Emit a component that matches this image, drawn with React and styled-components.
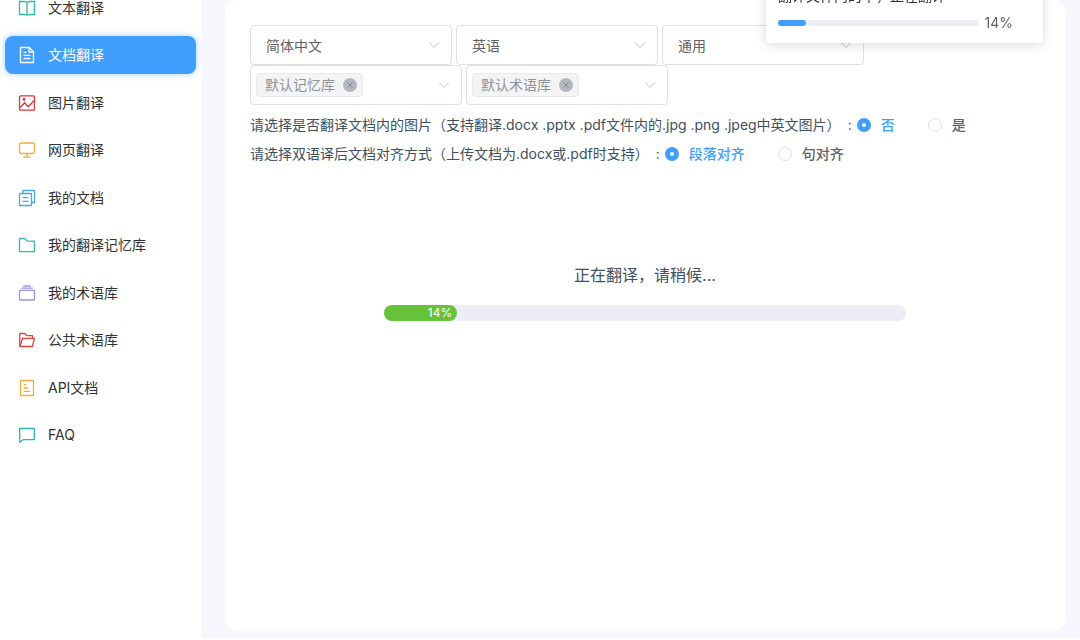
import { useState } from "react";
import styled, { createGlobalStyle } from "styled-components";

const menus = [
  { id: "text", name: "文本翻译", color: "#2fb5a5" },
  { id: "doc", name: "文档翻译", color: "#ffffff" },
  { id: "image", name: "图片翻译", color: "#d9363e" },
  { id: "web", name: "网页翻译", color: "#f0ad3c" },
  { id: "myDoc", name: "我的文档", color: "#4ba3e3" },
  { id: "memory", name: "我的翻译记忆库", color: "#3fb8ac" },
  { id: "term", name: "我的术语库", color: "#9c94e6" },
  { id: "publicTerm", name: "公共术语库", color: "#e0443e" },
  { id: "api", name: "API文档", color: "#f0ad3c" },
  { id: "faq", name: "FAQ", color: "#2fb5b0" },
];

const icons = {
  text: (
    <>
      <path d="M1.5 2.5h5.2L9 3.3l2.3-.8h5.2v13h-5.2l-2.3.7-2.3-.7H1.5z" />
      <path d="M9 3.3v12.9" />
    </>
  ),
  doc: (
    <>
      <path d="M2.5 1.5h8.7l4.3 4.3v10.7h-13z" />
      <path d="M11 1.5V6h4.5M5.5 6.3h3M5.5 9.3h7M5.5 12.5h7" />
    </>
  ),
  image: (
    <>
      <rect x="1.5" y="1.8" width="15" height="14.4" rx="1" />
      <path d="M2 13.8l4.6-5 3.7 4 6-6.5" />
      <circle cx="6" cy="5.4" r="0.8" fill="currentColor" />
    </>
  ),
  web: (
    <>
      <rect x="1.5" y="2" width="15" height="10.5" rx="1.8" />
      <path d="M9 12.5v3.6M5.2 16.2h7.6" />
    </>
  ),
  myDoc: (
    <>
      <rect x="1.5" y="4.5" width="12" height="12" rx="0.6" />
      <path d="M5 4.5v-3h11.5v12h-3M4.6 8.6h5.8M4.6 12.3h5.8" />
    </>
  ),
  memory: <path d="M1.5 2.5h5.3l2.3 2.6h7.4v10.6h-15z" />,
  term: (
    <>
      <rect x="1.5" y="6.3" width="15" height="9.7" rx="0.6" />
      <path d="M3.2 4.2h11.6M5.2 2h7.6" />
    </>
  ),
  publicTerm: (
    <>
      <path d="M1.8 15.5v-13h5l2 2.2h5.7v2.6" />
      <path d="M1.8 15.5l2.8-8.2h11.9l-2.2 8.2z" />
    </>
  ),
  api: (
    <>
      <rect x="2.5" y="1.5" width="13" height="15" rx="0.6" />
      <path d="M5.8 5.6h2.6M5.8 9h4.6M5.8 12.4h6.6" />
    </>
  ),
  faq: <path d="M1.7 2.5h14.6v11.2H5.2l-3.5 2.6z" />,
};

const Chevron = () => (
  <ChevronIcon viewBox="0 0 12 12" aria-hidden="true">
    <path d="M1 3.5l5 5 5-5" />
  </ChevronIcon>
);

const Select = ({ label, value }) => (
  <SelectBox $width={202}>
    <SelectInput aria-label={label} defaultValue={value}>
      <option>{value}</option>
    </SelectInput>
    <Chevron />
  </SelectBox>
);

const TagSelect = ({ label, tag, width }) => (
  <SelectBox $width={width}>
    <Tag>
      {tag}
      <TagClose type="button" aria-label={`移除${tag}`}>
        <svg viewBox="0 0 14 14" aria-hidden="true">
          <path d="M4.5 4.5l5 5M9.5 4.5l-5 5" />
        </svg>
      </TagClose>
    </Tag>
    <SelectInput aria-label={label} defaultValue="">
      <option value=""></option>
    </SelectInput>
    <Chevron />
  </SelectBox>
);

const RadioGroup = ({ title, name, options }) => {
  const [checked, setChecked] = useState(options[0]);

  return (
    <RadioRow role="radiogroup" aria-label={title}>
      <RadioTitle>
        <span>{title}</span>
        <span>:</span>
      </RadioTitle>
      {options.map((option) => (
        <RadioLabel key={option} $checked={checked === option}>
          <Radio
            type="radio"
            name={name}
            checked={checked === option}
            onChange={() => setChecked(option)}
          />
          {option}
        </RadioLabel>
      ))}
    </RadioRow>
  );
};

const App = () => {
  const [active, setActive] = useState("doc");
  const percent = 14;

  return (
    <>
      <GlobalStyle />
      <Page>
        <Sidebar>
          {menus.map((menu) => (
            <MenuItem
              key={menu.id}
              href={`#${menu.id}`}
              $active={active === menu.id}
              onClick={() => setActive(menu.id)}
            >
              <MenuIcon viewBox="0 0 18 18" $color={menu.color} aria-hidden="true">
                {icons[menu.id]}
              </MenuIcon>
              {menu.name}
            </MenuItem>
          ))}
        </Sidebar>
        <Content>
          <Panel>
            <SelectRow>
              <Select label="源语言" value="简体中文" />
              <Select label="目标语言" value="英语" />
              <Select label="领域" value="通用" />
            </SelectRow>
            <SelectRow>
              <TagSelect label="记忆库" tag="默认记忆库" width={212} />
              <TagSelect label="术语库" tag="默认术语库" width={202} />
            </SelectRow>
            <Options>
              <RadioGroup
                name="picture"
                title="请选择是否翻译文档内的图片（支持翻译.docx .pptx .pdf文件内的.jpg .png .jpeg中英文图片）"
                options={["否", "是"]}
              />
              <RadioGroup
                name="align"
                title="请选择双语译后文档对齐方式（上传文档为.docx或.pdf时支持）"
                options={["段落对齐", "句对齐"]}
              />
            </Options>
            <Loading>
              <LoadingText>正在翻译，请稍候...</LoadingText>
              <Track role="progressbar" aria-label="翻译进度" aria-valuenow={percent}>
                <Bar style={{ width: `${percent}%` }}>{percent}%</Bar>
              </Track>
            </Loading>
          </Panel>
        </Content>
      </Page>
      <Notice role="status">
        <NoticeText>翻译文件内的中，正在翻译</NoticeText>
        <NoticeProgress>
          <NoticeTrack>
            <NoticeBar style={{ width: `${percent}%` }} />
          </NoticeTrack>
          {percent}%
        </NoticeProgress>
      </Notice>
    </>
  );
};

const GlobalStyle = createGlobalStyle`
  * {
    box-sizing: border-box;
  }
  body {
    margin: 0;
    overflow: hidden;
    background: #ffffff;
    color: #303133;
    font-family: Inter, "Noto Sans CJK SC", sans-serif;
    font-size: 14px;
  }
  button, select, input {
    font: inherit;
  }
`;

const Page = styled.div`
  display: flex;
  height: calc(100vh - 2px);
  overflow: hidden;
`;

/* the menu is scrolled a little, its first entry is cut by the window */
const Sidebar = styled.nav`
  display: flex;
  flex-direction: column;
  justify-content: space-between;
  flex: none;
  width: 201px;
  height: 465px;
  margin-top: -11px;
  padding: 0 5px;
`;

const MenuItem = styled.a`
  display: flex;
  align-items: center;
  gap: 12px;
  height: 38px;
  padding-left: 13px;
  border-radius: 8px;
  color: ${({ $active }) => ($active ? "#ffffff" : "#303133")};
  background: ${({ $active }) => ($active ? "#409eff" : "transparent")};
  box-shadow: ${({ $active }) => ($active ? "0 0 6px rgba(64, 158, 255, 0.5)" : "none")};
  line-height: 20px;
  text-decoration: none;
`;

const MenuIcon = styled.svg`
  width: 18px;
  height: 18px;
  color: ${({ $color }) => $color};
  fill: none;
  stroke: currentColor;
  stroke-width: 1.3;
  stroke-linejoin: round;
`;

const Content = styled.main`
  flex: 1;
  display: flex;
  padding: 0 15px 7px 24px;
  background: #f5f7fc;
`;

const Panel = styled.section`
  flex: 1;
  padding: 25px;
  border-radius: 12px;
  background: #ffffff;
`;

const SelectRow = styled.div`
  display: flex;
  gap: 4px;
`;

const SelectBox = styled.div`
  position: relative;
  display: flex;
  align-items: center;
  width: ${({ $width }) => $width}px;
  height: 40px;
  border: 1px solid #dcdfe6;
  border-radius: 4px;
`;

const SelectInput = styled.select`
  flex: 1;
  min-width: 0;
  height: 38px;
  padding: 0 30px 0 15px;
  border: 0;
  outline: 0;
  appearance: none;
  background: transparent;
  color: #606266;
`;

const ChevronIcon = styled.svg`
  position: absolute;
  right: 11px;
  width: 12px;
  height: 12px;
  fill: none;
  stroke: #c0c4cc;
  pointer-events: none;
`;

const Tag = styled.span`
  display: flex;
  align-items: center;
  gap: 8px;
  height: 24px;
  margin-left: 5px;
  padding: 0 5px 0 8px;
  border: 1px solid #e9e9eb;
  border-radius: 4px;
  background: #f4f4f5;
  color: #909399;
  line-height: 20px;
`;

const TagClose = styled.button`
  width: 14px;
  height: 14px;
  padding: 0;
  border: 0;
  border-radius: 50%;
  background: #b4b8c2;
  svg {
    display: block;
    stroke: #82868f;
  }
`;

const Options = styled.div`
  margin-top: 5px;
`;

const RadioRow = styled.div`
  display: flex;
  align-items: center;
  height: 29px;
  line-height: 20px;
  white-space: nowrap;
`;

const RadioTitle = styled.span`
  display: flex;
  gap: 7px;
  margin-right: 5px;
  color: #40505f;
`;

const RadioLabel = styled.label`
  display: flex;
  align-items: center;
  gap: 10px;
  margin-right: 33px;
  color: ${({ $checked }) => ($checked ? "#409eff" : "#606266")};
  font-weight: 500;
`;

const Radio = styled.input`
  appearance: none;
  width: 14px;
  height: 14px;
  margin: 0;
  border: 1px solid #dcdfe6;
  border-radius: 50%;
  background: #ffffff;
  &:checked {
    border: 5px solid #409eff;
  }
`;

const Loading = styled.div`
  width: 66%;
  margin: 95px auto 0;
`;

const LoadingText = styled.p`
  margin: 0 0 18px;
  color: #40505f;
  font-size: 16px;
  line-height: 24px;
  text-align: center;
`;

const Track = styled.div`
  height: 16px;
  border-radius: 8px;
  background: #ebeef5;
`;

const Bar = styled.div`
  height: 16px;
  padding-right: 5px;
  border-radius: 8px;
  background: #67c23a;
  color: #ffffff;
  font-size: 12px;
  line-height: 16px;
  text-align: right;
`;

const Notice = styled.aside`
  position: fixed;
  top: -20px;
  right: 37px;
  width: 277px;
  height: 63px;
  padding: 6px 12px;
  border-radius: 4px;
  background: #ffffff;
  box-shadow: 0 2px 12px rgba(0, 0, 0, 0.15);
`;

const NoticeText = styled.p`
  margin: 0;
  color: #303133;
  line-height: 20px;
`;

const NoticeProgress = styled.div`
  display: flex;
  align-items: center;
  gap: 6px;
  margin-top: 6px;
  padding-right: 18px;
  color: #606266;
  line-height: 22px;
`;

const NoticeTrack = styled.div`
  flex: 1;
  height: 6px;
  border-radius: 3px;
  background: #ebeef5;
`;

const NoticeBar = styled.div`
  height: 6px;
  border-radius: 3px;
  background: #409eff;
`;

export default App;
